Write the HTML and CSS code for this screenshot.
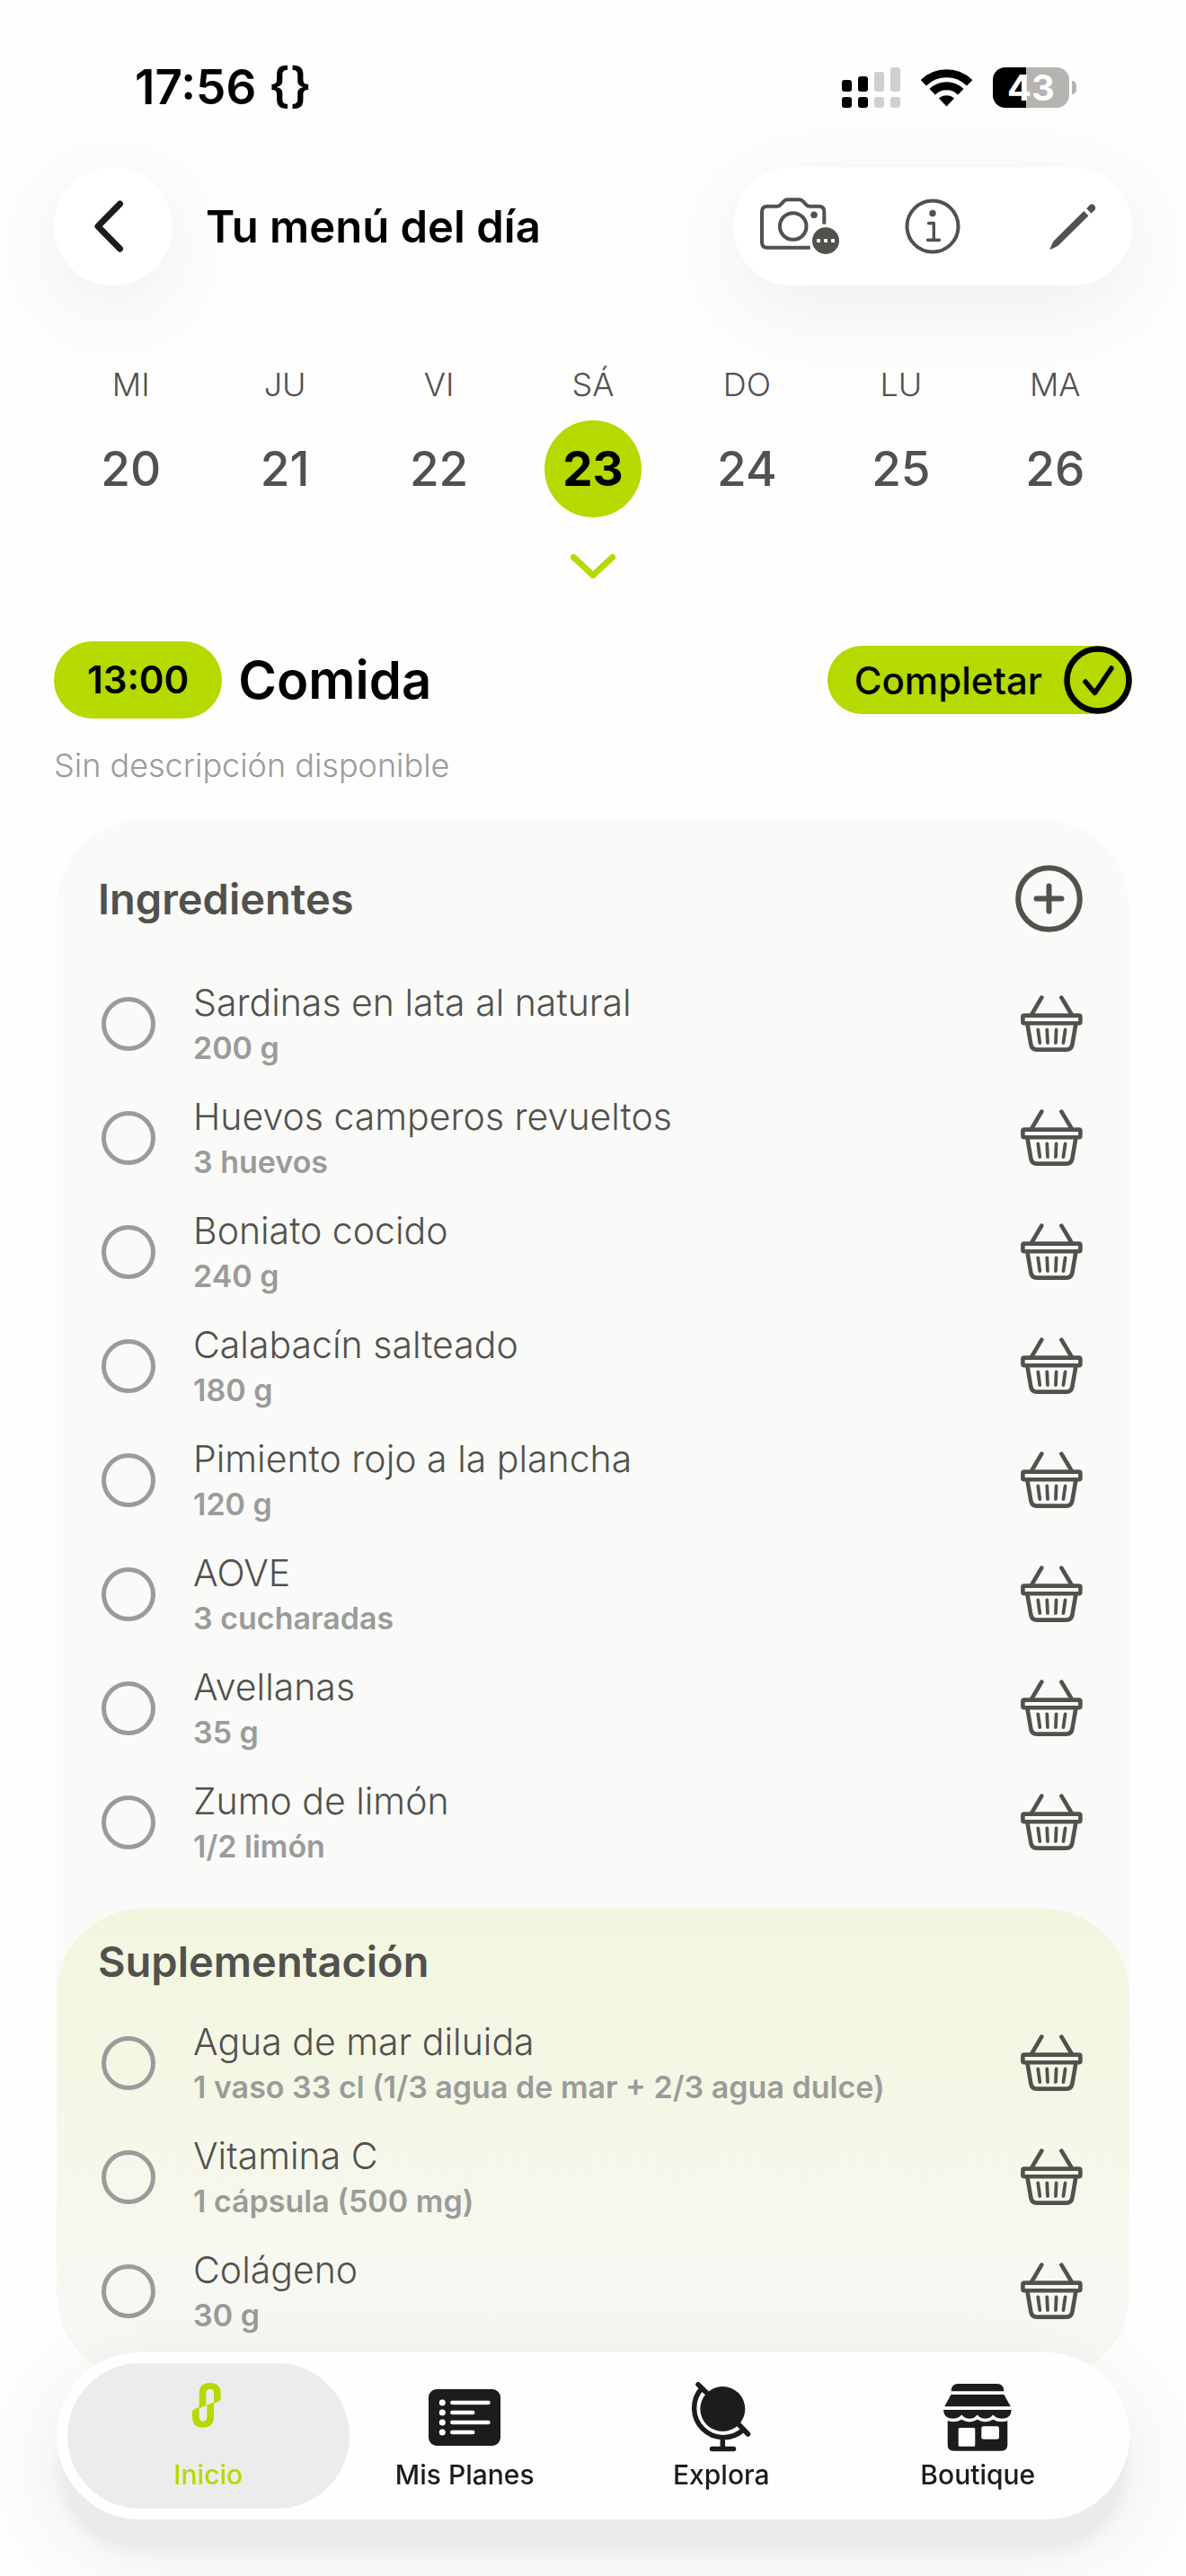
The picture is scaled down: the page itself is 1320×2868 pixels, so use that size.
FILE: index.html
```html
<!DOCTYPE html>
<html lang="es">
<head>
    <meta charset="UTF-8">
    <meta name="viewport" content="width=device-width, initial-scale=1.0">
    <title>Tu menú del día</title>
    <link rel="stylesheet" href="styles.css">
</head>
<body>
    <!-- Shared icons -->
    <svg class="sprite" aria-hidden="true">
        <symbol id="basket" viewBox="0 0 69 64">
            <g fill="none" stroke="currentColor" stroke-linecap="round" stroke-linejoin="round">
                <path stroke-width="4.6" d="M23.3 2.6 12.5 21M45.4 2.6 56.4 21"/>
                <rect stroke-width="4.6" x="2.4" y="22.6" width="64" height="8.6" rx="1.5"/>
                <path stroke-width="4.6" d="M7.6 33 11.4 55Q12.4 60.6 18 60.6H50.8Q56.4 60.6 57.4 55L61.2 33"/>
                <path stroke-width="3.8" d="M19.3 38.5 21.3 53M29.3 38.5 30 53M39.6 38.5 39 53M49.6 38.5 47.5 53"/>
            </g>
        </symbol>
    </svg>

    <!-- Status bar -->
    <div class="status-bar">
        <span class="clock">17:56 {}</span>
        <div class="status-icons">
            <svg width="65" height="45" viewBox="0 0 65 45" aria-hidden="true">
                <rect x="0" y="14" width="11" height="13" rx="3"/>
                <rect x="18" y="10" width="11" height="17" rx="3"/>
                <rect x="0" y="33" width="11" height="12" rx="3"/>
                <rect x="18" y="33" width="11" height="12" rx="3"/>
                <g fill="#cfcfcb">
                    <rect x="36" y="5" width="11" height="22" rx="3"/>
                    <rect x="54" y="0" width="11" height="27" rx="3"/>
                    <rect x="36" y="33" width="11" height="12" rx="3"/>
                    <rect x="54" y="33" width="11" height="12" rx="3"/>
                </g>
            </svg>
            <svg width="57" height="43" viewBox="0 0 57 43" aria-hidden="true">
                <path fill="none" stroke="#000" stroke-width="9" d="M2.8 16.3A36.5 36.5 0 0 1 54.2 16.3M12.7 26.2A22.5 22.5 0 0 1 44.3 26.2"/>
                <path d="M28.5 42.5 20 33.5A13 13 0 0 1 37 33.5Z"/>
            </svg>
            <div class="battery">43</div>
        </div>
    </div>

    <!-- Top header -->
    <header class="header">
        <button class="back-btn" aria-label="Volver">
            <svg width="36" height="60" viewBox="0 0 36 60" aria-hidden="true">
                <path fill="none" stroke="#1c1c1a" stroke-width="7" stroke-linecap="round" stroke-linejoin="round" d="M30.5 5 6 30 30.5 55"/>
            </svg>
        </button>
        <h1>Tu menú del día</h1>
        <div class="actions">
            <button aria-label="Cámara">
                <svg width="88" height="64" viewBox="0 0 88 64" aria-hidden="true">
                    <g fill="none" stroke="currentColor" stroke-width="4">
                        <path d="M55.7 55.7H8Q2 55.7 2 49.7V15.7Q2 9.7 8 9.7H18.5Q21 9.7 22.8 7.8L26.5 4Q28 2.3 30.5 2.3H43.5Q46 2.3 47.5 4L51.2 7.8Q53 9.7 55.5 9.7H65.3Q71.3 9.7 71.3 15.7V29.5"/>
                        <circle cx="36.7" cy="32" r="14.8"/>
                    </g>
                    <circle cx="60" cy="19.3" r="3.8" fill="currentColor"/>
                    <circle cx="73" cy="48" r="15" fill="currentColor"/>
                    <g fill="#fff">
                        <rect x="63" y="46" width="4" height="4" rx="1"/>
                        <rect x="71" y="46" width="4" height="4" rx="1"/>
                        <rect x="79" y="46" width="4" height="4" rx="1"/>
                    </g>
                </svg>
            </button>
            <button aria-label="Información">
                <svg width="62" height="62" viewBox="0 0 62 62" aria-hidden="true">
                    <g fill="none" stroke="currentColor" stroke-width="4" stroke-linecap="round" stroke-linejoin="round">
                        <circle cx="31" cy="31" r="28.5"/>
                        <path stroke-width="3.4" d="M26.5 27.5H32.3V46M25.5 46.2H38.5"/>
                    </g>
                    <circle cx="31" cy="16.5" r="3.7" fill="currentColor"/>
                </svg>
            </button>
            <button aria-label="Editar">
                <svg width="68" height="52" viewBox="-16 0 68 52" aria-hidden="true">
                    <g fill="currentColor">
                        <path d="M38.3 9 43.5 14.3 10.5 46.8Q9 48.2 7 49L1.8 51.5Q.2 52 .8 50.4L3.8 44Q4.3 42.5 5.5 41.4Z"/>
                        <path d="M41.3 6.2 44.3 2.7Q47 0 50 2.6 52.5 5.5 50 8.3L46.5 11.5Z"/>
                    </g>
                </svg>
            </button>
        </div>
    </header>

    <!-- Week days -->
    <nav class="week" aria-label="Semana">
        <button class="day"><span class="day-name">MI</span><span class="day-number">20</span></button>
        <button class="day"><span class="day-name">JU</span><span class="day-number">21</span></button>
        <button class="day"><span class="day-name">VI</span><span class="day-number">22</span></button>
        <button class="day selected"><span class="day-name">SÁ</span><span class="day-number">23</span></button>
        <button class="day"><span class="day-name">DO</span><span class="day-number">24</span></button>
        <button class="day"><span class="day-name">LU</span><span class="day-number">25</span></button>
        <button class="day"><span class="day-name">MA</span><span class="day-number">26</span></button>
    </nav>
    <button class="expand-btn" aria-label="Mostrar calendario">
        <svg width="52" height="30" viewBox="0 0 52 30" aria-hidden="true">
            <path fill="none" stroke="#b4da00" stroke-width="7" stroke-linecap="round" stroke-linejoin="round" d="M4.5 4.5 26 24.5 47.5 4.5"/>
        </svg>
    </button>

    <main>
        <div class="meal-header">
            <span class="meal-time">13:00</span>
            <h2>Comida</h2>
            <button class="complete-btn">
                Completar
                <svg width="76" height="76" viewBox="0 0 76 76" aria-hidden="true">
                    <g fill="none" stroke="#000" stroke-linecap="round" stroke-linejoin="round">
                        <circle stroke-width="6.5" cx="38" cy="38" r="34.5"/>
                        <path stroke-width="5.5" d="M24 40 34.5 52.5 53 25"/>
                    </g>
                </svg>
            </button>
        </div>
        <p class="description">Sin descripción disponible</p>

        <section class="card">
            <div class="card-title">
                <h3>Ingredientes</h3>
                <button class="add-btn" aria-label="Añadir ingrediente">
                    <svg width="75" height="75" viewBox="0 0 75 75" aria-hidden="true">
                        <g fill="none" stroke="currentColor" stroke-width="6" stroke-linecap="round">
                            <circle cx="37.5" cy="37.5" r="34.3"/>
                            <path d="M37.5 23.5V51.5M23.5 37.5H51.5"/>
                        </g>
                    </svg>
                </button>
            </div>
            <ul class="items">
                <li>
                    <input type="checkbox" id="i1">
                    <label for="i1">Sardinas en lata al natural <small>200 g</small></label>
                    <button class="basket-btn" aria-label="Añadir a la cesta"><svg><use href="#basket"/></svg></button>
                </li>
                <li>
                    <input type="checkbox" id="i2">
                    <label for="i2">Huevos camperos revueltos <small>3 huevos</small></label>
                    <button class="basket-btn" aria-label="Añadir a la cesta"><svg><use href="#basket"/></svg></button>
                </li>
                <li>
                    <input type="checkbox" id="i3">
                    <label for="i3">Boniato cocido <small>240 g</small></label>
                    <button class="basket-btn" aria-label="Añadir a la cesta"><svg><use href="#basket"/></svg></button>
                </li>
                <li>
                    <input type="checkbox" id="i4">
                    <label for="i4">Calabacín salteado <small>180 g</small></label>
                    <button class="basket-btn" aria-label="Añadir a la cesta"><svg><use href="#basket"/></svg></button>
                </li>
                <li>
                    <input type="checkbox" id="i5">
                    <label for="i5">Pimiento rojo a la plancha <small>120 g</small></label>
                    <button class="basket-btn" aria-label="Añadir a la cesta"><svg><use href="#basket"/></svg></button>
                </li>
                <li>
                    <input type="checkbox" id="i6">
                    <label for="i6">AOVE <small>3 cucharadas</small></label>
                    <button class="basket-btn" aria-label="Añadir a la cesta"><svg><use href="#basket"/></svg></button>
                </li>
                <li>
                    <input type="checkbox" id="i7">
                    <label for="i7">Avellanas <small>35 g</small></label>
                    <button class="basket-btn" aria-label="Añadir a la cesta"><svg><use href="#basket"/></svg></button>
                </li>
                <li>
                    <input type="checkbox" id="i8">
                    <label for="i8">Zumo de limón <small>1/2 limón</small></label>
                    <button class="basket-btn" aria-label="Añadir a la cesta"><svg><use href="#basket"/></svg></button>
                </li>
            </ul>

            <!-- Supplements -->
            <div class="supplements">
                <h3>Suplementación</h3>
                <ul class="items">
                    <li>
                        <input type="checkbox" id="s1">
                        <label for="s1">Agua de mar diluida <small>1 vaso 33 cl (1/3 agua de mar + 2/3 agua dulce)</small></label>
                        <button class="basket-btn" aria-label="Añadir a la cesta"><svg><use href="#basket"/></svg></button>
                    </li>
                    <li>
                        <input type="checkbox" id="s2">
                        <label for="s2">Vitamina C <small>1 cápsula (500 mg)</small></label>
                        <button class="basket-btn" aria-label="Añadir a la cesta"><svg><use href="#basket"/></svg></button>
                    </li>
                    <li>
                        <input type="checkbox" id="s3">
                        <label for="s3">Colágeno <small>30 g</small></label>
                        <button class="basket-btn" aria-label="Añadir a la cesta"><svg><use href="#basket"/></svg></button>
                    </li>
                </ul>
            </div>
        </section>
    </main>

    <!-- Bottom navigation -->
    <nav class="tab-bar" aria-label="Principal">
        <a href="#" class="active">
            <svg width="36" height="76" viewBox="0 0 36 76" aria-hidden="true">
                <g fill="currentColor">
                    <path d="M7.7 28.8V12Q7.7 0 19.7 0 31.7 0 31.7 12V18.2Q31 20.2 24 22.8V12Q24 7 19.7 7 15.3 7 15.3 12V25.2Q10 26.5 7.7 28.8Z"/>
                    <path d="M24 20.9V37.7Q24 49.7 12 49.7 0 49.7 0 37.7V31.5Q.7 29.5 7.7 26.9V37.7Q7.7 42.7 12 42.7 16.4 42.7 16.4 37.7V24.5Q21.7 23.2 24 20.9Z"/>
                </g>
            </svg>
            Inicio
        </a>
        <a href="#">
            <svg width="80" height="63" viewBox="0 0 80 63" aria-hidden="true">
                <rect width="80" height="63" rx="9" fill="currentColor"/>
                <g fill="#fff">
                    <circle cx="15.3" cy="15" r="3.5"/>
                    <circle cx="15.3" cy="26" r="3.5"/>
                    <circle cx="15.3" cy="37" r="3.5"/>
                    <circle cx="15.3" cy="48" r="3.5"/>
                </g>
                <path stroke="#fff" stroke-width="4.4" stroke-linecap="round" d="M26.3 15H66.5M26.3 26H49.3M26.3 37H66.5M26.3 48H49.3"/>
            </svg>
            Mis Planes
        </a>
        <a href="#">
            <svg width="67" height="78" viewBox="0 0 67 78" aria-hidden="true">
                <circle cx="35.3" cy="30" r="25" fill="currentColor"/>
                <path fill="none" stroke="currentColor" stroke-width="5.5" stroke-linecap="round" d="M12.2 6.9A32.7 32.7 0 0 0 58.4 53.1M8 2.8 20 14.5M53 47 63.5 58M35.3 63V74M23.5 74.5H47.5"/>
            </svg>
            Explora
        </a>
        <a href="#">
            <svg width="76" height="75" viewBox="0 0 76 75" aria-hidden="true">
                <g fill="currentColor">
                    <path d="M8.7 8.3V7Q9.5 0 16 0H60Q66.5 0 67.3 7V8.3Z"/>
                    <path d="M8.5 12H67.5L74.8 25.3H1.2Z"/>
                    <path d="M0 29H75.7Q75.5 38.7 66 38.7 58.5 38.7 55.3 34.5 52 38.7 46.5 38.7 41 38.7 37.8 34.5 34.6 38.7 29 38.7 23.5 38.7 20.3 34.5 17 38.7 10 38.7.3 38.7 0 29Z"/>
                    <path fill-rule="evenodd" d="M4.7 41.3Q13.5 44 20.3 39.8 29 45 37.8 39.8 46.5 45 55.3 39.8 62 44 71.3 41.3V68Q71.3 74.7 64.5 74.7H11.5Q4.7 74.7 4.7 68ZM18.2 49Q16.7 49 16.7 50.5V68.2Q16.7 69.7 18.2 69.7H33.8Q35.3 69.7 35.3 68.2V50.5Q35.3 49 33.8 49ZM44.8 47.3Q42.3 47.3 42.3 49.8V59.2Q42.3 61.7 44.8 61.7H59.5Q62 61.7 62 59.2V49.8Q62 47.3 59.5 47.3Z"/>
                </g>
            </svg>
            Boutique
        </a>
    </nav>
</body>
</html>
```

FILE: styles.css
```css
* {
    box-sizing: border-box;
}

body {
    margin: 0;
    min-height: 100vh;
    font-family: Inter, "Liberation Sans", sans-serif;
    background-color: #fefefe;
    color: #000;
    overflow-x: hidden;
}

h1, h2, h3, p, ul {
    margin: 0;
    padding: 0;
}

ul {
    list-style: none;
}

button {
    padding: 0;
    border: none;
    background: none;
    font: inherit;
    color: inherit;
    cursor: pointer;
}

svg {
    display: block;
}

.sprite {
    display: none;
}

/* Status bar */
.status-bar {
    display: flex;
    align-items: center;
    justify-content: space-between;
    padding: 66px 130px 0 150px;
}

.clock {
    font-size: 53px;
    line-height: 62px;
    font-weight: 600;
}

.status-icons {
    display: flex;
    align-items: center;
    gap: 23px;
}

.battery {
    position: relative;
    width: 85px;
    height: 45px;
    border-radius: 14px;
    background: linear-gradient(to right, #000 37px, #b4b4b1 37px);
    color: #fff;
    font-size: 40px;
    line-height: 45px;
    font-weight: 700;
    text-align: center;
}

/* Battery tip */
.battery::after {
    content: '';
    position: absolute;
    top: 15px;
    right: -8px;
    width: 5px;
    height: 15px;
    border-radius: 0 5px 5px 0;
    background-color: #b4b4b1;
}

/* Header */
.header {
    display: flex;
    align-items: center;
    padding: 0 60px;
    margin-top: 58px;
}

.header h1 {
    flex: 1;
    margin-left: 37px;
    font-size: 49px;
    font-weight: 600;
}

.back-btn, .actions {
    height: 132px;
    border-radius: 66px;
    background-color: #fff;
    box-shadow: 0 24px 100px rgba(70, 70, 40, 0.09);
}

.back-btn {
    display: flex;
    align-items: center;
    justify-content: center;
    width: 132px;
    padding-right: 10px;
}

.actions {
    display: grid;
    grid-template-columns: repeat(3, 148px);
    color: #51514e;
}

.actions button {
    display: flex;
    align-items: center;
    justify-content: center;
}

/* Week */
.week {
    display: grid;
    grid-template-columns: repeat(7, 1fr);
    padding: 0 60px;
    margin-top: 88px;
}

.day {
    display: flex;
    flex-direction: column;
    align-items: center;
    gap: 18px;
    color: #51514e;
}

.day-name {
    font-size: 36px;
    line-height: 44px;
    font-weight: 300;
}

.day-number {
    width: 108px;
    border-radius: 50%;
    font-size: 53px;
    line-height: 108px;
    font-weight: 500;
}

.day.selected .day-number {
    background-color: #b4da00;
    color: #000;
    font-weight: 700;
}

.expand-btn {
    display: block;
    margin: 40px auto 0;
}

/* Meal */
main {
    padding: 68px 60px 0;
}

.meal-header {
    display: flex;
    align-items: center;
    gap: 18px;
}

.meal-time {
    padding: 0 37px;
    border-radius: 43px;
    background-color: #b4da00;
    font-size: 42px;
    line-height: 86px;
    font-weight: 600;
}

.meal-header h2 {
    font-size: 58px;
    font-weight: 600;
}

.complete-btn {
    display: flex;
    align-items: center;
    gap: 24px;
    margin-left: auto;
    padding-left: 30px;
    border-radius: 38px;
    background-color: #b4da00;
    font-size: 42px;
    font-weight: 500;
}

.description {
    margin-top: 30px;
    font-size: 36px;
    line-height: 44px;
    font-weight: 300;
    color: #9b9b9b;
}

/* Ingredients card */
.card {
    margin: 39px 3px 0;
    padding-top: 50px;
    border-radius: 96px;
    background-color: #fafaf8;
    color: #51514e;
}

.card-title {
    display: flex;
    align-items: center;
    justify-content: space-between;
    padding: 0 52px 0 46px;
    margin-bottom: 38px;
}

.card h3 {
    font-size: 47px;
    line-height: 56px;
    font-weight: 600;
}

.items {
    padding: 0 52px 0 50px;
}

.items li {
    display: flex;
    align-items: center;
    gap: 42px;
    height: 127px;
}

.items input {
    appearance: none;
    width: 60px;
    height: 60px;
    margin: 0;
    border: 5px solid #9b9b9b;
    border-radius: 50%;
    cursor: pointer;
}

.items input:checked {
    border-color: #b4da00;
    background-color: #b4da00;
}

.items label {
    flex: 1;
    font-size: 41px;
    line-height: 54px;
    font-weight: 300;
}

.items small {
    display: block;
    font-size: 34px;
    line-height: 48px;
    font-weight: 600;
    color: #9b9b9b;
}

.basket-btn svg {
    width: 69px;
    height: 64px;
}

.supplements {
    margin-top: 33px;
    padding: 31px 0 36px;
    border-radius: 96px;
    background: linear-gradient(#f3f6df, #f5f7e6 40%, #f8f8f5 90%);
}

.supplements h3 {
    padding-left: 46px;
    margin-bottom: 21px;
}

/* Bottom navigation */
.tab-bar {
    position: fixed;
    left: 63px;
    right: 63px;
    bottom: 63px;
    display: grid;
    grid-template-columns: repeat(4, 1fr);
    padding: 12px 26px;
    border-radius: 93px;
    background-color: #fefefe;
    box-shadow: 0 38px 12px -2px #ebebeb, 0 30px 110px rgba(70, 70, 40, 0.12);
}

.tab-bar a {
    display: grid;
    grid-template-rows: 92px 36px;
    align-items: center;
    justify-items: center;
    height: 162px;
    padding-top: 14px;
    border-radius: 81px;
    color: #1c1c1a;
    font-size: 30px;
    line-height: 36px;
    font-weight: 500;
    text-decoration: none;
}

.tab-bar a.active {
    margin: 0 -14px;
    background-color: #ececec;
    color: #b4da00;
}
```
